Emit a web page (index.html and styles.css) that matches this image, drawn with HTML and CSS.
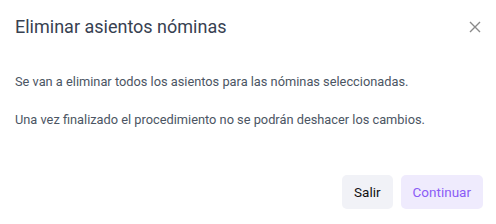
FILE: index.html
```html
<!DOCTYPE html>
<html lang="es">
<head>
<meta charset="utf-8">
<title>Eliminar asientos nóminas</title>
<link rel="stylesheet" href="styles.css">
</head>
<body>
<div class="modal">
  <div class="modal-header">
    <h2 class="modal-title">Eliminar asientos nóminas</h2>
    <button class="close" aria-label="Cerrar">
      <svg width="12" height="12" viewBox="0 0 12 12"><path d="M1 1L11 11M11 1L1 11" stroke="#8a8a8a" stroke-width="1.4" fill="none"/></svg>
    </button>
  </div>
  <div class="modal-body">
    <p>Se van a eliminar todos los asientos para las nóminas seleccionadas.</p>
    <p>Una vez finalizado el procedimiento no se podrán deshacer los cambios.</p>
  </div>
  <div class="modal-footer">
    <button class="btn btn-secondary">Salir</button>
    <button class="btn btn-primary">Continuar</button>
  </div>
</div>
</body>
</html>
```
FILE: styles.css
```css
html, body {
  margin: 0;
  padding: 0;
  background: #ffffff;
}
body {
  font-family: Roboto, "Liberation Sans", Arial, sans-serif;
  width: 496px;
  height: 224px;
  overflow: hidden;
}
.modal {
  width: 496px;
  height: 224px;
  box-sizing: border-box;
  display: flex;
  flex-direction: column;
}
.modal-header {
  display: flex;
  align-items: center;
  justify-content: space-between;
  padding: 15px 15px 0 15px;
  height: 24px;
}
.modal-title {
  margin: 0;
  font-size: 18px;
  font-weight: 400;
  line-height: 24px;
  color: #374151;
}
.close {
  border: 0;
  background: none;
  padding: 0;
  width: 12px;
  height: 12px;
  display: flex;
  cursor: pointer;
}
.modal-body {
  padding: 33px 16px 0 15px;
}
.modal-body p {
  margin: 0 0 18px 0;
  font-size: 12.8px;
  line-height: 20px;
  color: #4b5563;
}
.modal-footer {
  margin-top: auto;
  display: flex;
  justify-content: flex-end;
  gap: 8px;
  padding: 0 13px 15px 0;
}
.btn {
  height: 34px;
  border: 0;
  border-radius: 5px;
  font-family: Roboto, "Liberation Sans", Arial, sans-serif;
  font-size: 13.5px;
  padding: 0 12px;
  cursor: pointer;
}
.btn-secondary {
  background: #f1f2f7;
  color: #111111;
}
.btn-primary {
  background: #efebfd;
  color: #8b5cf6;
}
```
